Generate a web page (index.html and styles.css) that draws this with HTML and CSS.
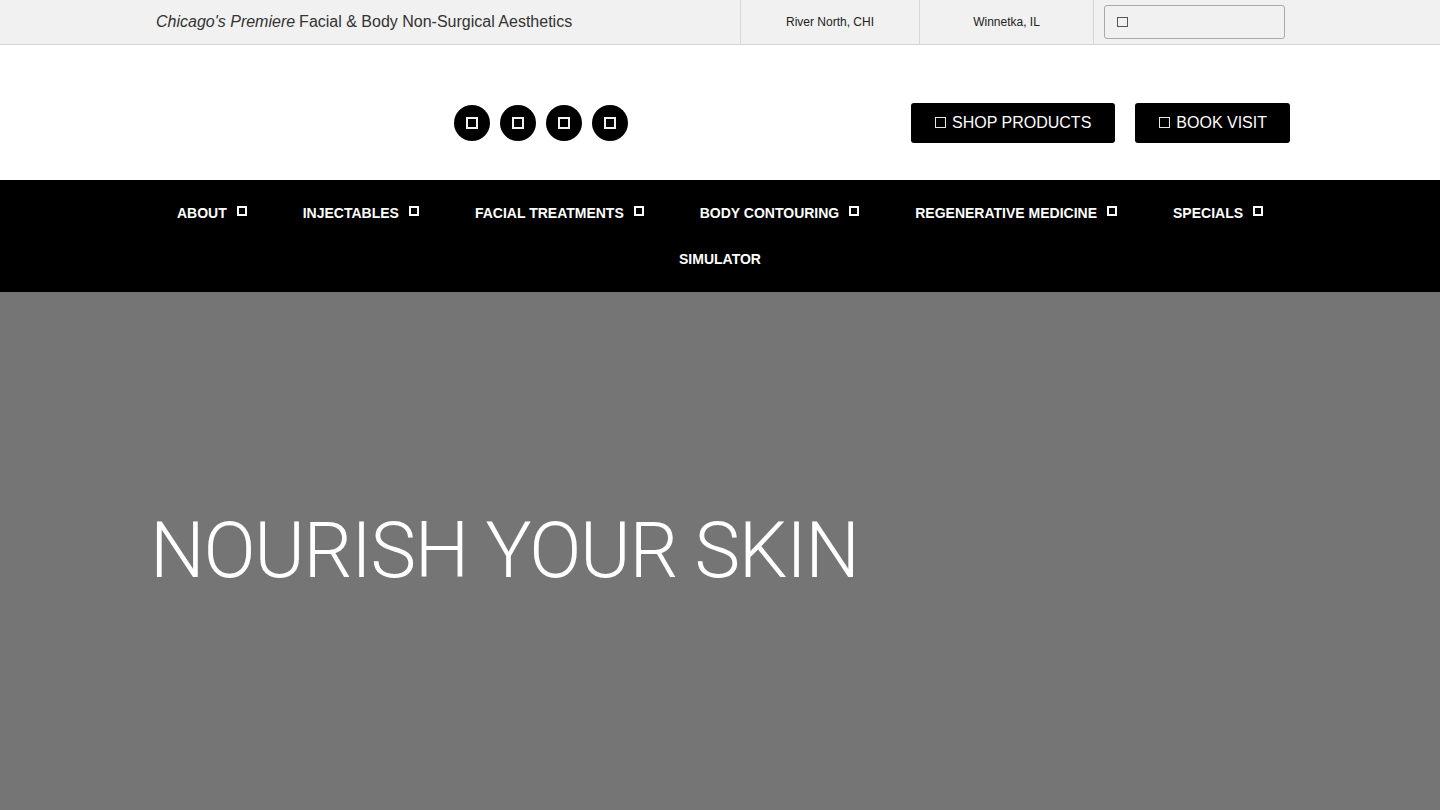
FILE: index.html
```html
<!DOCTYPE html>
<html lang="en">
<head>
<meta charset="utf-8">
<title>Chicago's Premiere Facial &amp; Body Non-Surgical Aesthetics</title>
<link rel="stylesheet" href="styles.css">
</head>
<body>
<div class="topbar">
  <div class="container topbar-inner">
    <div class="tagline"><em>Chicago's Premiere</em> Facial &amp; Body Non-Surgical Aesthetics</div>
    <div class="locations">
      <a class="loc" href="#">River North, CHI</a>
      <a class="loc" href="#">Winnetka, IL</a>
    </div>
    <div class="search-cell">
      <div class="search"><span class="glyph glyph-sm"></span></div>
    </div>
  </div>
</div>

<header class="header">
  <div class="container header-inner">
    <div class="logo-space"></div>
    <div class="socials">
      <a class="social" href="#"><span class="glyph glyph-social"></span></a>
      <a class="social" href="#"><span class="glyph glyph-social"></span></a>
      <a class="social" href="#"><span class="glyph glyph-social"></span></a>
      <a class="social" href="#"><span class="glyph glyph-social"></span></a>
    </div>
    <div class="actions">
      <a class="btn" href="#"><span class="glyph glyph-btn"></span>SHOP PRODUCTS</a>
      <a class="btn" href="#"><span class="glyph glyph-btn"></span>BOOK VISIT</a>
    </div>
  </div>
</header>

<nav class="nav">
  <ul class="nav-list">
    <li class="nav-item">ABOUT<span class="glyph glyph-nav"></span></li>
    <li class="nav-item">INJECTABLES<span class="glyph glyph-nav"></span></li>
    <li class="nav-item">FACIAL TREATMENTS<span class="glyph glyph-nav"></span></li>
    <li class="nav-item">BODY CONTOURING<span class="glyph glyph-nav"></span></li>
    <li class="nav-item">REGENERATIVE MEDICINE<span class="glyph glyph-nav"></span></li>
    <li class="nav-item">SPECIALS<span class="glyph glyph-nav"></span></li>
    <li class="nav-item">SIMULATOR</li>
  </ul>
</nav>

<section class="hero">
  <div class="container">
    <h1 class="hero-title">NOURISH YOUR SKIN</h1>
  </div>
</section>
</body>
</html>
```

FILE: styles.css
```css
* { box-sizing: border-box; }
html, body { margin: 0; padding: 0; }
body {
  font-family: "Liberation Sans", Arial, sans-serif;
  color: #333;
  background: #fff;
}
a { color: inherit; text-decoration: none; }

.container {
  width: 1140px;
  margin: 0 auto;
}

.glyph {
  display: inline-block;
  border-style: solid;
  flex-shrink: 0;
}
.glyph-sm { width: 11px; height: 10px; border-width: 1.5px; border-color: #555; }
.glyph-social { width: 12px; height: 12px; border-width: 2px; border-color: #f2f2f2; }
.glyph-btn { width: 11px; height: 11px; border-width: 1.5px; border-color: #e6e6e6; margin-right: 6px; }
.glyph-nav { width: 10px; height: 10px; border-width: 2px; border-color: #fff; margin-left: 10px; position: relative; top: -2px; }

/* Top bar */
.topbar {
  background: #f1f1f1;
  border-bottom: 1px solid #d6d6d6;
  height: 45px;
}
.topbar-inner {
  display: flex;
  align-items: stretch;
  height: 44px;
}
.tagline {
  flex: 1;
  padding-left: 6px;
  padding-bottom: 1px;
  display: flex;
  align-items: center;
  font-size: 16px;
  color: #333;
}
.tagline em { margin-right: 4px; }
.locations { display: flex; }
.loc {
  display: flex;
  align-items: center;
  justify-content: center;
  font-size: 12px;
  color: #222;
  border-left: 1px solid #d6d6d6;
}
.loc:first-child { width: 179px; }
.loc:last-child { width: 174px; }
.search-cell {
  border-left: 1px solid #d6d6d6;
  width: 197px;
  display: flex;
  align-items: center;
  padding-left: 10px;
}
.search {
  width: 181px;
  height: 34px;
  border: 1px solid #a9a9a9;
  border-radius: 3px;
  background: #f1f1f1;
  display: flex;
  align-items: center;
  padding-left: 12px;
}

/* Header */
.header {
  background: #fff;
  height: 135px;
}
.header-inner {
  display: flex;
  align-items: center;
  height: 100%;
  padding-top: 20px;
}
.logo-space { width: 304px; }
.socials { display: flex; gap: 10px; }
.social {
  width: 36px;
  height: 36px;
  border-radius: 50%;
  background: #000;
  display: flex;
  align-items: center;
  justify-content: center;
}
.actions {
  margin-left: auto;
  display: flex;
  gap: 20px;
}
.btn {
  background: #000;
  color: #fff;
  height: 40px;
  border-radius: 3px;
  display: flex;
  align-items: center;
  padding: 0 24px 0 24px;
  font-size: 16px;
}
.btn:last-child { padding-right: 23px; }

/* Nav */
.nav {
  background: #000;
  padding: 10px 0;
}
.nav-list {
  list-style: none;
  width: 1150px;
  margin: 0 auto;
  padding: 0;
  display: flex;
  flex-wrap: wrap;
  justify-content: center;
}
.nav-item {
  height: 46px;
  display: flex;
  align-items: center;
  padding: 0 28px;
  color: #fff;
  font-weight: bold;
  font-size: 14px;
}

/* Hero */
.hero {
  background: #757575;
  height: 520px;
  padding-top: 221px;
}
.hero-title {
  margin: 0;
  color: #fff;
  font-family: Roboto, "Liberation Sans", Arial, sans-serif;
  font-weight: 300;
  font-size: 77px;
  line-height: 1;
  letter-spacing: -1.3px;
}
```
